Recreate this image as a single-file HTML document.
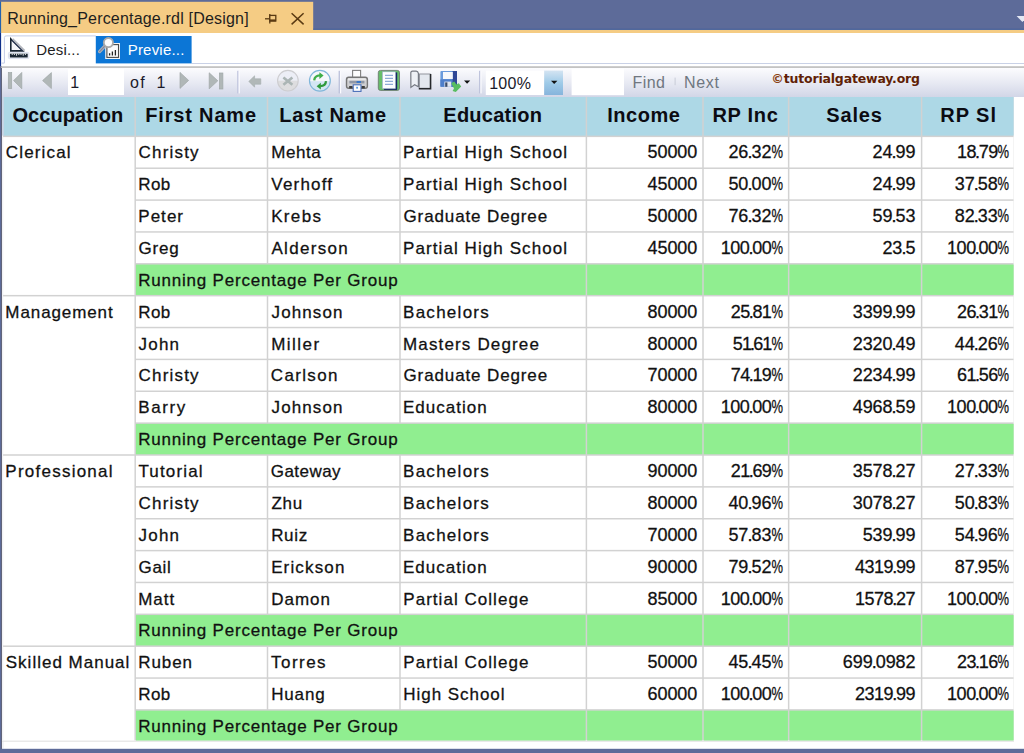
<!DOCTYPE html>
<html><head><meta charset="utf-8"><title>Running_Percentage.rdl [Design]</title>
<style>
html,body{margin:0;padding:0}
body{width:1024px;height:753px;overflow:hidden;background:#fff;position:relative;font-family:"Liberation Sans",sans-serif;color:#111}
#bg{position:absolute;left:0;top:0}
.t{position:absolute;white-space:nowrap}
.s{-webkit-text-stroke:0.28px currentColor}
.d{margin:0 -0.85px}
.o{margin:0 -1.10px}
.p{display:inline-block;transform:scaleX(0.719);transform-origin:100% 50%;margin-left:-4.50px;letter-spacing:0}
</style></head><body>
<svg id="bg" width="1024" height="753" viewBox="0 0 1024 753">
<defs>
<linearGradient id="tb" x1="0" y1="0" x2="0" y2="1"><stop offset="0" stop-color="#fcfcfe"/><stop offset="0.5" stop-color="#e8eaf3"/><stop offset="1" stop-color="#d2d6e7"/></linearGradient>
<linearGradient id="cb" x1="0" y1="0" x2="0" y2="1"><stop offset="0" stop-color="#d4e4f2"/><stop offset="0.5" stop-color="#9fcbe8"/><stop offset="1" stop-color="#86b4dc"/></linearGradient>
</defs>
<!-- title bar -->
<rect x="0" y="0" width="1024" height="33" fill="#5d6b99"/>
<rect x="1" y="1.8" width="312.2" height="31.2" fill="#f5cc84"/>
<rect x="0" y="29.7" width="1024" height="3.3" fill="#f5cc84"/>
<rect x="313.2" y="28.7" width="711" height="1.1" fill="#43609f"/>
<rect x="0" y="1.9" width="1.1" height="31.1" fill="#2462ae"/>
<rect x="0" y="33" width="1.1" height="33" fill="#10308a"/>
<rect x="0" y="66" width="1" height="687" fill="#5d6b99"/>
<rect x="1" y="66" width="1" height="683" fill="#62657a"/>
<rect x="2" y="67.6" width="1.8" height="681" fill="#f1f2f6"/>
<!-- tool bar -->
<rect x="191.6" y="63" width="833" height="0.9" fill="#c3cce4"/>
<rect x="1.1" y="66.2" width="1023" height="1.8" fill="#c3c3c3"/>
<rect x="2" y="68" width="1023" height="29" fill="url(#tb)"/>
<!-- tab strip: Desi tab outline -->
<path d="M1.4 63.1 H4.4 V37.6 Q4.4 35.9 6.2 35.9 H95.8" fill="none" stroke="#c3cbe6" stroke-width="1"/>
<!-- Previe tab -->
<rect x="95.8" y="36" width="95.8" height="27.4" fill="#0c76d6"/>
<!-- design icon -->
<g>
<rect x="8.4" y="52.4" width="20.4" height="6.2" rx="1" fill="#f3f5fa" stroke="#d3d9ec" stroke-width="0.8"/>
<path d="M10.8 39 V50.9 H22.8 Z" fill="#f6f6f8" stroke="#1a2633" stroke-width="1.6" stroke-linejoin="miter"/>
<path d="M12.6 38.9 L24.6 50.6" stroke="#b4b7be" stroke-width="1.7" fill="none"/>
<path d="M11.6 40.2 L22.6 50.8" stroke="#3f4a6e" stroke-width="1" fill="none"/>
<rect x="9.9" y="53.7" width="17.8" height="3.8" fill="#1a2633"/>
<path d="M12.2 53.7v1.3M14.4 53.7v1.3M16.6 53.7v2M18.8 53.7v1.3M21 53.7v1.3M23.2 53.7v2M25.4 53.7v1.3" stroke="#fff" stroke-width="0.9"/>
</g>
<!-- preview icon -->
<g>
<rect x="105.2" y="43" width="14.8" height="16" fill="#f2f2f2"/>
<rect x="106.9" y="44.6" width="11.6" height="12.8" fill="#fbfbfb" stroke="#4a4a4a" stroke-width="1.1"/>
<path d="M109.6 55.5v-2.2M112.4 55.5v-4M115.4 55.5v-5.6" stroke="#222" stroke-width="1.3"/>
<path d="M104.8 46.2 L99.6 51.6" stroke="#b4b4b4" stroke-width="3.2" stroke-linecap="round"/>
<path d="M104.8 46.2 L99.6 51.6" stroke="#7b86a8" stroke-width="1.2" stroke-linecap="round"/>
<circle cx="108.4" cy="42.6" r="4.6" fill="#fdfdfd" stroke="#a9a9a9" stroke-width="1.8"/>
</g>
<!-- pin + close on title tab -->
<g stroke="#5a3a12" fill="none" stroke-width="1.3">
<path d="M265 18.8 H269.2"/>
<path d="M269.8 14 V23.6"/>
<rect x="269.8" y="15.4" width="6" height="5.6" fill="#f5cc84"/>
<path d="M269.8 20.4 H275.8" stroke-width="2"/>
<path d="M291.6 13.2 L303.6 24.4 M303.6 13.2 L291.6 24.4" stroke-width="1.5"/>
</g>
<path d="M1016.6 16 H1024 V20.3 L1022.4 22 Z" fill="#e4e8f4"/>
<!-- nav icons -->
<g fill="#b0b7b7" stroke="#a0a8a8" stroke-width="0.7">
<rect x="8.3" y="72.6" width="3.4" height="16"/>
<path d="M13.6 80.6 L21.8 72.4 V88.8 Z"/>
<path d="M42.6 80.6 L51.4 72.6 V88.6 Z"/>
<path d="M188.6 80.4 L180 72.4 V88.4 Z"/>
<path d="M217.8 80.8 L209.2 72.8 V88.8 Z"/>
<rect x="219.4" y="73" width="3.5" height="16"/>
</g>
<!-- input boxes -->
<rect x="68" y="69" width="56" height="26" fill="#fff"/>
<rect x="485.8" y="70.6" width="58.4" height="24.4" fill="#fff"/>
<rect x="544.2" y="70.6" width="18.8" height="24.4" fill="url(#cb)"/>
<path d="M551 80.8 H557.4 L554.2 84 Z" fill="#111"/>
<rect x="571.6" y="68.6" width="52.4" height="26.6" fill="#fff"/>
<!-- separators -->
<g>
<rect x="237.2" y="70.8" width="1.4" height="22.6" fill="#bfc4dc"/><rect x="238.6" y="70.8" width="1.2" height="22.6" fill="#fbfbfe"/>
<rect x="338.6" y="70.8" width="1.4" height="22.6" fill="#bfc4dc"/><rect x="340" y="70.8" width="1.2" height="22.6" fill="#fbfbfe"/>
<rect x="479" y="70.8" width="1.4" height="22.6" fill="#bfc4dc"/><rect x="480.4" y="70.8" width="1.2" height="22.6" fill="#fbfbfe"/>
<rect x="674.6" y="77.6" width="1" height="7.6" fill="#c8ccd8"/>
</g>
<!-- back arrow -->
<path d="M248.8 81.4 L254.6 75.8 V78.8 H260.8 V84.2 H254.6 V87.2 Z" fill="#b1b8b8" stroke="#a5adad" stroke-width="0.6"/>
<!-- stop -->
<clipPath id="cs"><circle cx="287.9" cy="80.7" r="10.3"/></clipPath>
<g clip-path="url(#cs)"><rect x="276" y="69" width="24" height="11.7" fill="#eceef6"/><rect x="276" y="80.7" width="24" height="12" fill="#dddddf"/></g>
<circle cx="287.9" cy="80.7" r="10.3" fill="none" stroke="#cdcdd0" stroke-width="1.1"/>
<path d="M283.4 77.4 L292.4 84.8 M292.4 77.4 L283.4 84.8" stroke="#abb5b5" stroke-width="2.6"/>
<!-- refresh -->
<clipPath id="cr"><circle cx="319.9" cy="80.7" r="10.4"/></clipPath>
<g clip-path="url(#cr)"><rect x="308" y="69" width="24" height="12.3" fill="#f5f7fb"/><rect x="308" y="81.3" width="24" height="12" fill="#d3e6f3"/></g>
<circle cx="319.9" cy="80.7" r="10.4" fill="none" stroke="#80b6da" stroke-width="1.2"/>
<path d="M314.2 80.4 Q314.6 75.6 320 75.4" fill="none" stroke="#3fae49" stroke-width="2.3"/>
<path d="M319.4 72.2 L323.6 75.6 L319.4 79 Z" fill="#3fae49"/>
<path d="M326 81.2 Q325.6 86 320.2 86.2" fill="none" stroke="#2f9a3c" stroke-width="2.3"/>
<path d="M320.8 89.6 L316.6 86.2 L320.8 82.8 Z" fill="#2f9a3c"/>
<!-- printer -->
<g>
<rect x="352.6" y="70.4" width="8" height="8" fill="#fdfdfd" stroke="#7f7f7f" stroke-width="1.1"/>
<rect x="346.5" y="77.2" width="20.9" height="11" rx="2.2" fill="#cfcfd1" stroke="#767676" stroke-width="1.4"/>
<rect x="348" y="78.4" width="17.8" height="2" fill="#e9e9ea"/>
<rect x="349.4" y="80.8" width="15" height="2.6" fill="#8f97a6"/>
<rect x="356.6" y="81" width="4.4" height="2" fill="#3b78c8"/>
<rect x="349.2" y="86" width="3.4" height="2.4" fill="#3c3c3c"/><rect x="361.4" y="86" width="3.4" height="2.4" fill="#3c3c3c"/>
<rect x="353.2" y="84.8" width="7.8" height="6.6" fill="#fdfdfd" stroke="#4a6fb8" stroke-width="1.1"/>
<rect x="356.2" y="86.8" width="1.8" height="1.8" fill="#5b9be0"/>
</g>
<!-- print layout -->
<g>
<rect x="378.3" y="70.4" width="21.2" height="20" rx="2.2" fill="#66bd6a" stroke="#6d7a70" stroke-width="0.9"/>
<rect x="395.4" y="72.4" width="1.8" height="17" fill="#1b2668"/>
<rect x="384" y="88.4" width="13" height="1.5" fill="#1b2668"/>
<rect x="382.4" y="71.8" width="13" height="16.8" fill="#fcfcff" stroke="#9aaaca" stroke-width="0.6"/>
<path d="M385 75.4H393M385 78.4H393M385 81.4H393M385 84.4H393" stroke="#8eabd6" stroke-width="1.2"/>
</g>
<!-- page setup -->
<g>
<path d="M410.8 72.6 Q411 71 413 71.2 H416.2 Q418 71.2 418.4 73.4 V86.8 L414.6 84.8 L410.9 87.4 Z" fill="#eef1f6" stroke="#777b84" stroke-width="1.2"/>
<rect x="419.4" y="74" width="10.8" height="14.2" fill="#e4e8ef" stroke="#8a8e96" stroke-width="0.9"/>
<path d="M430.6 74 V88.8 H418.8" fill="none" stroke="#26282c" stroke-width="1.5"/>
</g>
<!-- export -->
<g>
<rect x="440.4" y="71" width="16.6" height="15.8" rx="1" fill="#6a9bdc"/>
<rect x="440.4" y="79.4" width="12.4" height="7.4" fill="#4f7fca"/>
<rect x="452.6" y="71" width="4.4" height="15.8" fill="#2f4796"/>
<rect x="443" y="72" width="9.8" height="7" fill="#f6f8fb"/>
<rect x="444.4" y="81.6" width="6.8" height="5.2" fill="#dfe4ee"/>
<rect x="445.2" y="82.4" width="2.2" height="4.4" fill="#3a4a66"/>
<path d="M451.2 83.2 L454.2 81.6 L456.4 84.6 L458.8 83.2 L461.2 86.6 L455.8 92 L452.6 91 L454 88.6 Z" fill="#58bd60"/>
<path d="M464 80.6 H470.2 L467.1 83.8 Z" fill="#111"/>
</g>

<rect x="3.1" y="97.0" width="1010.5" height="643.5" fill="#d2d2d2"/>
<rect x="3.10" y="97.00" width="131.35" height="38.60" fill="#add8e6"/>
<rect x="135.95" y="97.00" width="130.80" height="38.60" fill="#add8e6"/>
<rect x="268.25" y="97.00" width="131.00" height="38.60" fill="#add8e6"/>
<rect x="400.75" y="97.00" width="184.90" height="38.60" fill="#add8e6"/>
<rect x="587.15" y="97.00" width="115.10" height="38.60" fill="#add8e6"/>
<rect x="703.75" y="97.00" width="84.15" height="38.60" fill="#add8e6"/>
<rect x="789.40" y="97.00" width="131.45" height="38.60" fill="#add8e6"/>
<rect x="922.35" y="97.00" width="91.25" height="38.60" fill="#add8e6"/>
<rect x="135.95" y="137.10" width="130.80" height="30.37" fill="#ffffff"/>
<rect x="268.25" y="137.10" width="131.00" height="30.37" fill="#ffffff"/>
<rect x="400.75" y="137.10" width="184.90" height="30.37" fill="#ffffff"/>
<rect x="587.15" y="137.10" width="115.10" height="30.37" fill="#ffffff"/>
<rect x="703.75" y="137.10" width="84.15" height="30.37" fill="#ffffff"/>
<rect x="789.40" y="137.10" width="131.45" height="30.37" fill="#ffffff"/>
<rect x="922.35" y="137.10" width="91.25" height="30.37" fill="#ffffff"/>
<rect x="135.95" y="168.97" width="130.80" height="30.36" fill="#ffffff"/>
<rect x="268.25" y="168.97" width="131.00" height="30.36" fill="#ffffff"/>
<rect x="400.75" y="168.97" width="184.90" height="30.36" fill="#ffffff"/>
<rect x="587.15" y="168.97" width="115.10" height="30.36" fill="#ffffff"/>
<rect x="703.75" y="168.97" width="84.15" height="30.36" fill="#ffffff"/>
<rect x="789.40" y="168.97" width="131.45" height="30.36" fill="#ffffff"/>
<rect x="922.35" y="168.97" width="91.25" height="30.36" fill="#ffffff"/>
<rect x="135.95" y="200.83" width="130.80" height="30.37" fill="#ffffff"/>
<rect x="268.25" y="200.83" width="131.00" height="30.37" fill="#ffffff"/>
<rect x="400.75" y="200.83" width="184.90" height="30.37" fill="#ffffff"/>
<rect x="587.15" y="200.83" width="115.10" height="30.37" fill="#ffffff"/>
<rect x="703.75" y="200.83" width="84.15" height="30.37" fill="#ffffff"/>
<rect x="789.40" y="200.83" width="131.45" height="30.37" fill="#ffffff"/>
<rect x="922.35" y="200.83" width="91.25" height="30.37" fill="#ffffff"/>
<rect x="135.95" y="232.69" width="130.80" height="30.37" fill="#ffffff"/>
<rect x="268.25" y="232.69" width="131.00" height="30.37" fill="#ffffff"/>
<rect x="400.75" y="232.69" width="184.90" height="30.37" fill="#ffffff"/>
<rect x="587.15" y="232.69" width="115.10" height="30.37" fill="#ffffff"/>
<rect x="703.75" y="232.69" width="84.15" height="30.37" fill="#ffffff"/>
<rect x="789.40" y="232.69" width="131.45" height="30.37" fill="#ffffff"/>
<rect x="922.35" y="232.69" width="91.25" height="30.37" fill="#ffffff"/>
<rect x="135.95" y="264.56" width="449.70" height="30.36" fill="#90ee90"/>
<rect x="587.15" y="264.56" width="115.10" height="30.36" fill="#90ee90"/>
<rect x="703.75" y="264.56" width="84.15" height="30.36" fill="#90ee90"/>
<rect x="789.40" y="264.56" width="131.45" height="30.36" fill="#90ee90"/>
<rect x="922.35" y="264.56" width="91.25" height="30.36" fill="#90ee90"/>
<rect x="3.10" y="137.10" width="131.35" height="157.82" fill="#ffffff"/>
<rect x="135.95" y="296.42" width="130.80" height="30.37" fill="#ffffff"/>
<rect x="268.25" y="296.42" width="131.00" height="30.37" fill="#ffffff"/>
<rect x="400.75" y="296.42" width="184.90" height="30.37" fill="#ffffff"/>
<rect x="587.15" y="296.42" width="115.10" height="30.37" fill="#ffffff"/>
<rect x="703.75" y="296.42" width="84.15" height="30.37" fill="#ffffff"/>
<rect x="789.40" y="296.42" width="131.45" height="30.37" fill="#ffffff"/>
<rect x="922.35" y="296.42" width="91.25" height="30.37" fill="#ffffff"/>
<rect x="135.95" y="328.29" width="130.80" height="30.37" fill="#ffffff"/>
<rect x="268.25" y="328.29" width="131.00" height="30.37" fill="#ffffff"/>
<rect x="400.75" y="328.29" width="184.90" height="30.37" fill="#ffffff"/>
<rect x="587.15" y="328.29" width="115.10" height="30.37" fill="#ffffff"/>
<rect x="703.75" y="328.29" width="84.15" height="30.37" fill="#ffffff"/>
<rect x="789.40" y="328.29" width="131.45" height="30.37" fill="#ffffff"/>
<rect x="922.35" y="328.29" width="91.25" height="30.37" fill="#ffffff"/>
<rect x="135.95" y="360.15" width="130.80" height="30.37" fill="#ffffff"/>
<rect x="268.25" y="360.15" width="131.00" height="30.37" fill="#ffffff"/>
<rect x="400.75" y="360.15" width="184.90" height="30.37" fill="#ffffff"/>
<rect x="587.15" y="360.15" width="115.10" height="30.37" fill="#ffffff"/>
<rect x="703.75" y="360.15" width="84.15" height="30.37" fill="#ffffff"/>
<rect x="789.40" y="360.15" width="131.45" height="30.37" fill="#ffffff"/>
<rect x="922.35" y="360.15" width="91.25" height="30.37" fill="#ffffff"/>
<rect x="135.95" y="392.02" width="130.80" height="30.37" fill="#ffffff"/>
<rect x="268.25" y="392.02" width="131.00" height="30.37" fill="#ffffff"/>
<rect x="400.75" y="392.02" width="184.90" height="30.37" fill="#ffffff"/>
<rect x="587.15" y="392.02" width="115.10" height="30.37" fill="#ffffff"/>
<rect x="703.75" y="392.02" width="84.15" height="30.37" fill="#ffffff"/>
<rect x="789.40" y="392.02" width="131.45" height="30.37" fill="#ffffff"/>
<rect x="922.35" y="392.02" width="91.25" height="30.37" fill="#ffffff"/>
<rect x="135.95" y="423.88" width="449.70" height="30.37" fill="#90ee90"/>
<rect x="587.15" y="423.88" width="115.10" height="30.37" fill="#90ee90"/>
<rect x="703.75" y="423.88" width="84.15" height="30.37" fill="#90ee90"/>
<rect x="789.40" y="423.88" width="131.45" height="30.37" fill="#90ee90"/>
<rect x="922.35" y="423.88" width="91.25" height="30.37" fill="#90ee90"/>
<rect x="3.10" y="296.42" width="131.35" height="157.83" fill="#ffffff"/>
<rect x="135.95" y="455.75" width="130.80" height="30.37" fill="#ffffff"/>
<rect x="268.25" y="455.75" width="131.00" height="30.37" fill="#ffffff"/>
<rect x="400.75" y="455.75" width="184.90" height="30.37" fill="#ffffff"/>
<rect x="587.15" y="455.75" width="115.10" height="30.37" fill="#ffffff"/>
<rect x="703.75" y="455.75" width="84.15" height="30.37" fill="#ffffff"/>
<rect x="789.40" y="455.75" width="131.45" height="30.37" fill="#ffffff"/>
<rect x="922.35" y="455.75" width="91.25" height="30.37" fill="#ffffff"/>
<rect x="135.95" y="487.62" width="130.80" height="30.37" fill="#ffffff"/>
<rect x="268.25" y="487.62" width="131.00" height="30.37" fill="#ffffff"/>
<rect x="400.75" y="487.62" width="184.90" height="30.37" fill="#ffffff"/>
<rect x="587.15" y="487.62" width="115.10" height="30.37" fill="#ffffff"/>
<rect x="703.75" y="487.62" width="84.15" height="30.37" fill="#ffffff"/>
<rect x="789.40" y="487.62" width="131.45" height="30.37" fill="#ffffff"/>
<rect x="922.35" y="487.62" width="91.25" height="30.37" fill="#ffffff"/>
<rect x="135.95" y="519.48" width="130.80" height="30.37" fill="#ffffff"/>
<rect x="268.25" y="519.48" width="131.00" height="30.37" fill="#ffffff"/>
<rect x="400.75" y="519.48" width="184.90" height="30.37" fill="#ffffff"/>
<rect x="587.15" y="519.48" width="115.10" height="30.37" fill="#ffffff"/>
<rect x="703.75" y="519.48" width="84.15" height="30.37" fill="#ffffff"/>
<rect x="789.40" y="519.48" width="131.45" height="30.37" fill="#ffffff"/>
<rect x="922.35" y="519.48" width="91.25" height="30.37" fill="#ffffff"/>
<rect x="135.95" y="551.35" width="130.80" height="30.36" fill="#ffffff"/>
<rect x="268.25" y="551.35" width="131.00" height="30.36" fill="#ffffff"/>
<rect x="400.75" y="551.35" width="184.90" height="30.36" fill="#ffffff"/>
<rect x="587.15" y="551.35" width="115.10" height="30.36" fill="#ffffff"/>
<rect x="703.75" y="551.35" width="84.15" height="30.36" fill="#ffffff"/>
<rect x="789.40" y="551.35" width="131.45" height="30.36" fill="#ffffff"/>
<rect x="922.35" y="551.35" width="91.25" height="30.36" fill="#ffffff"/>
<rect x="135.95" y="583.21" width="130.80" height="30.37" fill="#ffffff"/>
<rect x="268.25" y="583.21" width="131.00" height="30.37" fill="#ffffff"/>
<rect x="400.75" y="583.21" width="184.90" height="30.37" fill="#ffffff"/>
<rect x="587.15" y="583.21" width="115.10" height="30.37" fill="#ffffff"/>
<rect x="703.75" y="583.21" width="84.15" height="30.37" fill="#ffffff"/>
<rect x="789.40" y="583.21" width="131.45" height="30.37" fill="#ffffff"/>
<rect x="922.35" y="583.21" width="91.25" height="30.37" fill="#ffffff"/>
<rect x="135.95" y="615.07" width="449.70" height="30.37" fill="#90ee90"/>
<rect x="587.15" y="615.07" width="115.10" height="30.37" fill="#90ee90"/>
<rect x="703.75" y="615.07" width="84.15" height="30.37" fill="#90ee90"/>
<rect x="789.40" y="615.07" width="131.45" height="30.37" fill="#90ee90"/>
<rect x="922.35" y="615.07" width="91.25" height="30.37" fill="#90ee90"/>
<rect x="3.10" y="455.75" width="131.35" height="189.69" fill="#ffffff"/>
<rect x="135.95" y="646.94" width="130.80" height="30.37" fill="#ffffff"/>
<rect x="268.25" y="646.94" width="131.00" height="30.37" fill="#ffffff"/>
<rect x="400.75" y="646.94" width="184.90" height="30.37" fill="#ffffff"/>
<rect x="587.15" y="646.94" width="115.10" height="30.37" fill="#ffffff"/>
<rect x="703.75" y="646.94" width="84.15" height="30.37" fill="#ffffff"/>
<rect x="789.40" y="646.94" width="131.45" height="30.37" fill="#ffffff"/>
<rect x="922.35" y="646.94" width="91.25" height="30.37" fill="#ffffff"/>
<rect x="135.95" y="678.80" width="130.80" height="30.37" fill="#ffffff"/>
<rect x="268.25" y="678.80" width="131.00" height="30.37" fill="#ffffff"/>
<rect x="400.75" y="678.80" width="184.90" height="30.37" fill="#ffffff"/>
<rect x="587.15" y="678.80" width="115.10" height="30.37" fill="#ffffff"/>
<rect x="703.75" y="678.80" width="84.15" height="30.37" fill="#ffffff"/>
<rect x="789.40" y="678.80" width="131.45" height="30.37" fill="#ffffff"/>
<rect x="922.35" y="678.80" width="91.25" height="30.37" fill="#ffffff"/>
<rect x="135.95" y="710.67" width="449.70" height="29.83" fill="#90ee90"/>
<rect x="587.15" y="710.67" width="115.10" height="29.83" fill="#90ee90"/>
<rect x="703.75" y="710.67" width="84.15" height="29.83" fill="#90ee90"/>
<rect x="789.40" y="710.67" width="131.45" height="29.83" fill="#90ee90"/>
<rect x="922.35" y="710.67" width="91.25" height="29.83" fill="#90ee90"/>
<rect x="3.10" y="646.94" width="131.35" height="93.56" fill="#ffffff"/>
<rect x="2" y="97" width="1.9" height="38.6" fill="#c9d6e6"/>
<!-- bottom -->
<rect x="2" y="741" width="1012" height="0.8" fill="#e4e4e4"/>
<rect x="0" y="748.8" width="1024" height="5" fill="#5d6b99"/>
</svg>
<div class="t" style="left:12.45px;top:103px;font-size:20px;line-height:25px;font-weight:bold;letter-spacing:0.077px;color:#0b0b12;">Occupation</div>
<div class="t" style="left:145.29px;top:103px;font-size:20px;line-height:25px;font-weight:bold;letter-spacing:0.822px;color:#0b0b12;">First Name</div>
<div class="t" style="left:279.29px;top:103px;font-size:20px;line-height:25px;font-weight:bold;letter-spacing:0.702px;color:#0b0b12;">Last Name</div>
<div class="t" style="left:443.36px;top:103px;font-size:20px;line-height:25px;font-weight:bold;letter-spacing:0.228px;color:#0b0b12;">Education</div>
<div class="t" style="left:607.29px;top:103px;font-size:20px;line-height:25px;font-weight:bold;letter-spacing:0.532px;color:#0b0b12;">Income</div>
<div class="t" style="left:712.41px;top:103px;font-size:20px;line-height:25px;font-weight:bold;letter-spacing:0.697px;color:#0b0b12;">RP Inc</div>
<div class="t" style="left:826.34px;top:103px;font-size:20px;line-height:25px;font-weight:bold;letter-spacing:0.799px;color:#0b0b12;">Sales</div>
<div class="t" style="left:940.29px;top:103px;font-size:20px;line-height:25px;font-weight:bold;letter-spacing:0.949px;color:#0b0b12;">RP Sl</div>
<div class="t s" style="left:138.62px;top:142px;font-size:17px;line-height:21px;letter-spacing:1.181px;color:#111;">Christy</div>
<div class="t s" style="left:271.14px;top:142px;font-size:17px;line-height:21px;letter-spacing:0.606px;color:#111;">Mehta</div>
<div class="t s" style="left:403.02px;top:142px;font-size:17px;line-height:21px;letter-spacing:1.081px;color:#111;">Partial High School</div>
<div class="t s" style="left:647.58px;top:141px;font-size:18px;line-height:22px;letter-spacing:-0.080px;color:#111;">50000</div>
<div class="t s" style="left:728.46px;top:141px;font-size:18px;line-height:22px;letter-spacing:-0.100px;color:#111;">26<span class="d">.</span>32<span class="p">%</span></div>
<div class="t s" style="left:872.55px;top:141px;font-size:18px;line-height:22px;letter-spacing:-0.120px;color:#111;">24<span class="d">.</span>99</div>
<div class="t s" style="left:956.96px;top:141px;font-size:18px;line-height:22px;letter-spacing:-0.540px;color:#111;">18<span class="d">.</span>79<span class="p">%</span></div>
<div class="t s" style="left:138.26px;top:174px;font-size:17px;line-height:21px;letter-spacing:0.356px;color:#111;">Rob</div>
<div class="t s" style="left:271.31px;top:174px;font-size:17px;line-height:21px;letter-spacing:1.188px;color:#111;">Verhoff</div>
<div class="t s" style="left:403.02px;top:174px;font-size:17px;line-height:21px;letter-spacing:1.081px;color:#111;">Partial High School</div>
<div class="t s" style="left:647.58px;top:173px;font-size:18px;line-height:22px;letter-spacing:-0.080px;color:#111;">45000</div>
<div class="t s" style="left:728.46px;top:173px;font-size:18px;line-height:22px;letter-spacing:-0.100px;color:#111;">50<span class="d">.</span>00<span class="p">%</span></div>
<div class="t s" style="left:872.55px;top:173px;font-size:18px;line-height:22px;letter-spacing:-0.120px;color:#111;">24<span class="d">.</span>99</div>
<div class="t s" style="left:954.76px;top:173px;font-size:18px;line-height:22px;letter-spacing:-0.100px;color:#111;">37<span class="d">.</span>58<span class="p">%</span></div>
<div class="t s" style="left:138.26px;top:206px;font-size:17px;line-height:21px;letter-spacing:1.037px;color:#111;">Peter</div>
<div class="t s" style="left:271.14px;top:206px;font-size:17px;line-height:21px;letter-spacing:1.364px;color:#111;">Krebs</div>
<div class="t s" style="left:403.52px;top:206px;font-size:17px;line-height:21px;letter-spacing:0.875px;color:#111;">Graduate Degree</div>
<div class="t s" style="left:647.58px;top:205px;font-size:18px;line-height:22px;letter-spacing:-0.080px;color:#111;">50000</div>
<div class="t s" style="left:728.46px;top:205px;font-size:18px;line-height:22px;letter-spacing:-0.100px;color:#111;">76<span class="d">.</span>32<span class="p">%</span></div>
<div class="t s" style="left:872.55px;top:205px;font-size:18px;line-height:22px;letter-spacing:-0.120px;color:#111;">59<span class="d">.</span>53</div>
<div class="t s" style="left:954.76px;top:205px;font-size:18px;line-height:22px;letter-spacing:-0.100px;color:#111;">82<span class="d">.</span>33<span class="p">%</span></div>
<div class="t s" style="left:138.59px;top:238px;font-size:17px;line-height:21px;letter-spacing:0.768px;color:#111;">Greg</div>
<div class="t s" style="left:271.48px;top:238px;font-size:17px;line-height:21px;letter-spacing:1.315px;color:#111;">Alderson</div>
<div class="t s" style="left:403.02px;top:238px;font-size:17px;line-height:21px;letter-spacing:1.081px;color:#111;">Partial High School</div>
<div class="t s" style="left:647.58px;top:237px;font-size:18px;line-height:22px;letter-spacing:-0.080px;color:#111;">45000</div>
<div class="t s" style="left:720.75px;top:237px;font-size:18px;line-height:22px;letter-spacing:-0.467px;color:#111;">100<span class="d">.</span>00<span class="p">%</span></div>
<div class="t s" style="left:882.44px;top:237px;font-size:18px;line-height:22px;letter-spacing:-0.120px;color:#111;">23<span class="d">.</span>5</div>
<div class="t s" style="left:947.05px;top:237px;font-size:18px;line-height:22px;letter-spacing:-0.467px;color:#111;">100<span class="d">.</span>00<span class="p">%</span></div>
<div class="t s" style="left:138.21px;top:270px;font-size:17px;line-height:21px;letter-spacing:0.788px;color:#111;">Running Percentage Per Group</div>
<div class="t s" style="left:5.78px;top:142px;font-size:17px;line-height:21px;letter-spacing:1.157px;color:#111;">Clerical</div>
<div class="t s" style="left:138.26px;top:302px;font-size:17px;line-height:21px;letter-spacing:0.356px;color:#111;">Rob</div>
<div class="t s" style="left:271.53px;top:302px;font-size:17px;line-height:21px;letter-spacing:1.119px;color:#111;">Johnson</div>
<div class="t s" style="left:403.02px;top:302px;font-size:17px;line-height:21px;letter-spacing:1.274px;color:#111;">Bachelors</div>
<div class="t s" style="left:647.58px;top:301px;font-size:18px;line-height:22px;letter-spacing:-0.080px;color:#111;">80000</div>
<div class="t s" style="left:730.66px;top:301px;font-size:18px;line-height:22px;letter-spacing:-0.540px;color:#111;">25<span class="d">.</span>81<span class="p">%</span></div>
<div class="t s" style="left:852.77px;top:301px;font-size:18px;line-height:22px;letter-spacing:-0.120px;color:#111;">3399<span class="d">.</span>99</div>
<div class="t s" style="left:956.96px;top:301px;font-size:18px;line-height:22px;letter-spacing:-0.540px;color:#111;">26<span class="d">.</span>31<span class="p">%</span></div>
<div class="t s" style="left:138.62px;top:334px;font-size:17px;line-height:21px;letter-spacing:1.175px;color:#111;">John</div>
<div class="t s" style="left:271.14px;top:334px;font-size:17px;line-height:21px;letter-spacing:1.478px;color:#111;">Miller</div>
<div class="t s" style="left:403.02px;top:334px;font-size:17px;line-height:21px;letter-spacing:1.149px;color:#111;">Masters Degree</div>
<div class="t s" style="left:647.58px;top:333px;font-size:18px;line-height:22px;letter-spacing:-0.080px;color:#111;">80000</div>
<div class="t s" style="left:732.86px;top:333px;font-size:18px;line-height:22px;letter-spacing:-0.980px;color:#111;">51<span class="d">.</span>61<span class="p">%</span></div>
<div class="t s" style="left:852.77px;top:333px;font-size:18px;line-height:22px;letter-spacing:-0.120px;color:#111;">2320<span class="d">.</span>49</div>
<div class="t s" style="left:954.76px;top:333px;font-size:18px;line-height:22px;letter-spacing:-0.100px;color:#111;">44<span class="d">.</span>26<span class="p">%</span></div>
<div class="t s" style="left:138.62px;top:365px;font-size:17px;line-height:21px;letter-spacing:1.181px;color:#111;">Christy</div>
<div class="t s" style="left:270.78px;top:365px;font-size:17px;line-height:21px;letter-spacing:1.345px;color:#111;">Carlson</div>
<div class="t s" style="left:403.52px;top:365px;font-size:17px;line-height:21px;letter-spacing:0.875px;color:#111;">Graduate Degree</div>
<div class="t s" style="left:647.58px;top:364px;font-size:18px;line-height:22px;letter-spacing:-0.080px;color:#111;">70000</div>
<div class="t s" style="left:730.66px;top:364px;font-size:18px;line-height:22px;letter-spacing:-0.540px;color:#111;">74<span class="d">.</span>19<span class="p">%</span></div>
<div class="t s" style="left:852.77px;top:364px;font-size:18px;line-height:22px;letter-spacing:-0.120px;color:#111;">2234<span class="d">.</span>99</div>
<div class="t s" style="left:956.96px;top:364px;font-size:18px;line-height:22px;letter-spacing:-0.540px;color:#111;">61<span class="d">.</span>56<span class="p">%</span></div>
<div class="t s" style="left:138.26px;top:397px;font-size:17px;line-height:21px;letter-spacing:1.569px;color:#111;">Barry</div>
<div class="t s" style="left:271.53px;top:397px;font-size:17px;line-height:21px;letter-spacing:1.119px;color:#111;">Johnson</div>
<div class="t s" style="left:403.02px;top:397px;font-size:17px;line-height:21px;letter-spacing:1.018px;color:#111;">Education</div>
<div class="t s" style="left:647.58px;top:396px;font-size:18px;line-height:22px;letter-spacing:-0.080px;color:#111;">80000</div>
<div class="t s" style="left:720.75px;top:396px;font-size:18px;line-height:22px;letter-spacing:-0.467px;color:#111;">100<span class="d">.</span>00<span class="p">%</span></div>
<div class="t s" style="left:852.77px;top:396px;font-size:18px;line-height:22px;letter-spacing:-0.120px;color:#111;">4968<span class="d">.</span>59</div>
<div class="t s" style="left:947.05px;top:396px;font-size:18px;line-height:22px;letter-spacing:-0.467px;color:#111;">100<span class="d">.</span>00<span class="p">%</span></div>
<div class="t s" style="left:138.21px;top:429px;font-size:17px;line-height:21px;letter-spacing:0.788px;color:#111;">Running Percentage Per Group</div>
<div class="t s" style="left:5.37px;top:302px;font-size:17px;line-height:21px;letter-spacing:0.901px;color:#111;">Management</div>
<div class="t s" style="left:138.38px;top:461px;font-size:17px;line-height:21px;letter-spacing:1.159px;color:#111;">Tutorial</div>
<div class="t s" style="left:270.75px;top:461px;font-size:17px;line-height:21px;letter-spacing:0.463px;color:#111;">Gateway</div>
<div class="t s" style="left:403.02px;top:461px;font-size:17px;line-height:21px;letter-spacing:1.274px;color:#111;">Bachelors</div>
<div class="t s" style="left:647.58px;top:460px;font-size:18px;line-height:22px;letter-spacing:-0.080px;color:#111;">90000</div>
<div class="t s" style="left:730.66px;top:460px;font-size:18px;line-height:22px;letter-spacing:-0.540px;color:#111;">21<span class="d">.</span>69<span class="p">%</span></div>
<div class="t s" style="left:852.77px;top:460px;font-size:18px;line-height:22px;letter-spacing:-0.120px;color:#111;">3578<span class="d">.</span>27</div>
<div class="t s" style="left:954.76px;top:460px;font-size:18px;line-height:22px;letter-spacing:-0.100px;color:#111;">27<span class="d">.</span>33<span class="p">%</span></div>
<div class="t s" style="left:138.62px;top:493px;font-size:17px;line-height:21px;letter-spacing:1.181px;color:#111;">Christy</div>
<div class="t s" style="left:271.55px;top:493px;font-size:17px;line-height:21px;letter-spacing:0.629px;color:#111;">Zhu</div>
<div class="t s" style="left:403.02px;top:493px;font-size:17px;line-height:21px;letter-spacing:1.274px;color:#111;">Bachelors</div>
<div class="t s" style="left:647.58px;top:492px;font-size:18px;line-height:22px;letter-spacing:-0.080px;color:#111;">80000</div>
<div class="t s" style="left:728.46px;top:492px;font-size:18px;line-height:22px;letter-spacing:-0.100px;color:#111;">40<span class="d">.</span>96<span class="p">%</span></div>
<div class="t s" style="left:852.77px;top:492px;font-size:18px;line-height:22px;letter-spacing:-0.120px;color:#111;">3078<span class="d">.</span>27</div>
<div class="t s" style="left:954.76px;top:492px;font-size:18px;line-height:22px;letter-spacing:-0.100px;color:#111;">50<span class="d">.</span>83<span class="p">%</span></div>
<div class="t s" style="left:138.62px;top:525px;font-size:17px;line-height:21px;letter-spacing:1.175px;color:#111;">John</div>
<div class="t s" style="left:271.14px;top:525px;font-size:17px;line-height:21px;letter-spacing:0.708px;color:#111;">Ruiz</div>
<div class="t s" style="left:403.02px;top:525px;font-size:17px;line-height:21px;letter-spacing:1.274px;color:#111;">Bachelors</div>
<div class="t s" style="left:647.58px;top:524px;font-size:18px;line-height:22px;letter-spacing:-0.080px;color:#111;">70000</div>
<div class="t s" style="left:728.46px;top:524px;font-size:18px;line-height:22px;letter-spacing:-0.100px;color:#111;">57<span class="d">.</span>83<span class="p">%</span></div>
<div class="t s" style="left:862.66px;top:524px;font-size:18px;line-height:22px;letter-spacing:-0.120px;color:#111;">539<span class="d">.</span>99</div>
<div class="t s" style="left:954.76px;top:524px;font-size:18px;line-height:22px;letter-spacing:-0.100px;color:#111;">54<span class="d">.</span>96<span class="p">%</span></div>
<div class="t s" style="left:138.59px;top:557px;font-size:17px;line-height:21px;letter-spacing:0.657px;color:#111;">Gail</div>
<div class="t s" style="left:271.14px;top:557px;font-size:17px;line-height:21px;letter-spacing:1.153px;color:#111;">Erickson</div>
<div class="t s" style="left:403.02px;top:557px;font-size:17px;line-height:21px;letter-spacing:1.018px;color:#111;">Education</div>
<div class="t s" style="left:647.58px;top:556px;font-size:18px;line-height:22px;letter-spacing:-0.080px;color:#111;">90000</div>
<div class="t s" style="left:728.46px;top:556px;font-size:18px;line-height:22px;letter-spacing:-0.100px;color:#111;">79<span class="d">.</span>52<span class="p">%</span></div>
<div class="t s" style="left:854.97px;top:556px;font-size:18px;line-height:22px;letter-spacing:-0.487px;color:#111;">4319<span class="d">.</span>99</div>
<div class="t s" style="left:954.76px;top:556px;font-size:18px;line-height:22px;letter-spacing:-0.100px;color:#111;">87<span class="d">.</span>95<span class="p">%</span></div>
<div class="t s" style="left:138.26px;top:589px;font-size:17px;line-height:21px;letter-spacing:0.942px;color:#111;">Matt</div>
<div class="t s" style="left:271.14px;top:589px;font-size:17px;line-height:21px;letter-spacing:1.017px;color:#111;">Damon</div>
<div class="t s" style="left:403.30px;top:589px;font-size:17px;line-height:21px;letter-spacing:1.034px;color:#111;">Partial College</div>
<div class="t s" style="left:647.58px;top:588px;font-size:18px;line-height:22px;letter-spacing:-0.080px;color:#111;">85000</div>
<div class="t s" style="left:720.75px;top:588px;font-size:18px;line-height:22px;letter-spacing:-0.467px;color:#111;">100<span class="d">.</span>00<span class="p">%</span></div>
<div class="t s" style="left:854.97px;top:588px;font-size:18px;line-height:22px;letter-spacing:-0.487px;color:#111;">1578<span class="d">.</span>27</div>
<div class="t s" style="left:947.05px;top:588px;font-size:18px;line-height:22px;letter-spacing:-0.467px;color:#111;">100<span class="d">.</span>00<span class="p">%</span></div>
<div class="t s" style="left:138.21px;top:620px;font-size:17px;line-height:21px;letter-spacing:0.788px;color:#111;">Running Percentage Per Group</div>
<div class="t s" style="left:5.37px;top:461px;font-size:17px;line-height:21px;letter-spacing:1.239px;color:#111;">Professional</div>
<div class="t s" style="left:138.26px;top:652px;font-size:17px;line-height:21px;letter-spacing:0.915px;color:#111;">Ruben</div>
<div class="t s" style="left:271.11px;top:652px;font-size:17px;line-height:21px;letter-spacing:1.450px;color:#111;">Torres</div>
<div class="t s" style="left:403.30px;top:652px;font-size:17px;line-height:21px;letter-spacing:1.034px;color:#111;">Partial College</div>
<div class="t s" style="left:647.58px;top:651px;font-size:18px;line-height:22px;letter-spacing:-0.080px;color:#111;">50000</div>
<div class="t s" style="left:728.46px;top:651px;font-size:18px;line-height:22px;letter-spacing:-0.100px;color:#111;">45<span class="d">.</span>45<span class="p">%</span></div>
<div class="t s" style="left:842.87px;top:651px;font-size:18px;line-height:22px;letter-spacing:-0.120px;color:#111;">699<span class="d">.</span>0982</div>
<div class="t s" style="left:956.96px;top:651px;font-size:18px;line-height:22px;letter-spacing:-0.540px;color:#111;">23<span class="d">.</span>16<span class="p">%</span></div>
<div class="t s" style="left:138.26px;top:684px;font-size:17px;line-height:21px;letter-spacing:0.356px;color:#111;">Rob</div>
<div class="t s" style="left:271.14px;top:684px;font-size:17px;line-height:21px;letter-spacing:0.863px;color:#111;">Huang</div>
<div class="t s" style="left:403.30px;top:684px;font-size:17px;line-height:21px;letter-spacing:0.959px;color:#111;">High School</div>
<div class="t s" style="left:647.58px;top:683px;font-size:18px;line-height:22px;letter-spacing:-0.080px;color:#111;">60000</div>
<div class="t s" style="left:720.75px;top:683px;font-size:18px;line-height:22px;letter-spacing:-0.467px;color:#111;">100<span class="d">.</span>00<span class="p">%</span></div>
<div class="t s" style="left:854.97px;top:683px;font-size:18px;line-height:22px;letter-spacing:-0.487px;color:#111;">2319<span class="d">.</span>99</div>
<div class="t s" style="left:947.05px;top:683px;font-size:18px;line-height:22px;letter-spacing:-0.467px;color:#111;">100<span class="d">.</span>00<span class="p">%</span></div>
<div class="t s" style="left:138.21px;top:716px;font-size:17px;line-height:21px;letter-spacing:0.788px;color:#111;">Running Percentage Per Group</div>
<div class="t s" style="left:5.78px;top:652px;font-size:17px;line-height:21px;letter-spacing:1.000px;color:#111;">Skilled Manual</div>
<div class="t" style="left:7.18px;top:9px;font-size:16px;line-height:20px;letter-spacing:0.192px;color:#1e1e1e;">Running_Percentage.rdl [Design]</div>
<div class="t" style="left:36.34px;top:40px;font-size:15px;line-height:19px;letter-spacing:0.168px;color:#1e1e1e;">Desi...</div>
<div class="t" style="left:127.70px;top:40px;font-size:15px;line-height:19px;letter-spacing:0.206px;color:#ffffff;">Previe...</div>
<div class="t" style="left:70.20px;top:73px;font-size:16px;line-height:20px;letter-spacing:0.000px;color:#1a1a2a;">1</div>
<div class="t" style="left:130.00px;top:73px;font-size:16px;line-height:20px;letter-spacing:1.352px;color:#1a1a2a;">of</div>
<div class="t" style="left:156.60px;top:73px;font-size:16px;line-height:20px;letter-spacing:0.000px;color:#1a1a2a;">1</div>
<div class="t" style="left:489.17px;top:74px;font-size:16px;line-height:20px;letter-spacing:0.275px;color:#1a1a2a;">100%</div>
<div class="t" style="left:632.50px;top:73px;font-size:16px;line-height:20px;letter-spacing:0.424px;color:#6f7780;">Find</div>
<div class="t" style="left:684.00px;top:73px;font-size:16px;line-height:20px;letter-spacing:0.649px;color:#6f7780;">Next</div>
<div class="t" style="left:771.32px;top:71px;font-size:12.5px;line-height:16px;font-weight:bold;font-family:'DejaVu Sans', 'Liberation Sans', sans-serif;letter-spacing:-0.173px;color:#601f06;"><span style="color:#8a4416">©</span>tutorialgateway.org</div>
</body></html>
